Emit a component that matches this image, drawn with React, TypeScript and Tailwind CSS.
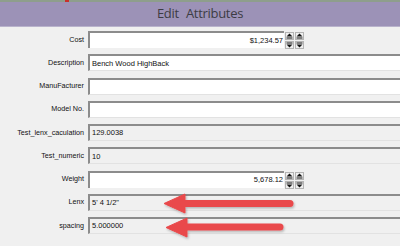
import React from "react";

type Field = {
  label: string;
  value?: string;
  kind: "text" | "readonly" | "spin";
};

const fields: Field[] = [
  { label: "Cost", value: "$1,234.57", kind: "spin" },
  { label: "Description", value: "Bench Wood HighBack", kind: "text" },
  { label: "ManuFacturer", kind: "text" },
  { label: "Model No.", kind: "text" },
  { label: "Test_lenx_caculation", value: "129.0038", kind: "readonly" },
  { label: "Test_numeric", value: "10", kind: "readonly" },
  { label: "Weight", value: "5,678.12", kind: "spin" },
  { label: "Lenx", value: "5' 4 1/2\"", kind: "readonly" },
  { label: "spacing", value: "5.000000", kind: "readonly" },
];

function SpinButton({ up }: { up: boolean }) {
  return (
    <div className="flex h-[8px] w-[9px] items-center justify-center border border-[#b4b4b4] bg-[#eeeeee]">
      <svg width="7" height="6" viewBox="0 0 7 6">
        {up ? (
          <>
            <path d="M3.5 0.5 L6.5 3.5 L0.5 3.5 Z" fill="#111" />
            <rect x="0.5" y="4.5" width="6" height="1" fill="#111" />
          </>
        ) : (
          <>
            <rect x="0.5" y="0.5" width="6" height="1" fill="#111" />
            <path d="M0.5 2.5 L6.5 2.5 L3.5 5.5 Z" fill="#111" />
          </>
        )}
      </svg>
    </div>
  );
}

function SpinColumn() {
  return (
    <div className="flex flex-col gap-[1px] pt-[1px]">
      <SpinButton up />
      <SpinButton up={false} />
    </div>
  );
}

function FieldBox({ field }: { field: Field }) {
  if (field.kind === "spin") {
    return (
      <div className="flex h-[18px] items-start">
        <div className="flex h-[17px] w-[196px] items-center justify-end border-t-2 border-l-2 border-t-[#8c8c8c] border-l-[#8c8c8c] bg-white pr-[1px] text-[7.5px] text-[#111]">
          {field.value}
        </div>
        <div className="ml-[1px] flex gap-[1px]">
          <SpinColumn />
          <SpinColumn />
        </div>
      </div>
    );
  }
  const bg = field.kind === "text" ? "bg-white" : "bg-[#f0f0f0]";
  return (
    <div
      className={`flex h-[17px] w-[330px] items-center border-t-2 border-l-2 border-b border-t-[#8c8c8c] border-l-[#8c8c8c] border-b-[#e2e2e2] pl-[2px] text-[7.5px] text-[#111] ${bg}`}
    >
      {field.value}
    </div>
  );
}

export default function App() {
  return (
    <div
      className="relative h-[246px] w-[400px] overflow-hidden bg-[#f0f0f0]"
      style={{ fontFamily: '"Liberation Sans", Arial, sans-serif' }}
    >
      <div className="relative h-[2px] bg-[#8e9e8c]">
        <div className="absolute left-[65px] top-0 h-[2px] w-[4px] bg-[#c8302c]" />
      </div>
      <div className="flex h-[25px] items-center justify-center bg-[#9c92b7] border-b border-[#b9b3cc]">
        <span
          className="text-[13px] tracking-[-0.3px] text-[#3c3c44] [word-spacing:4px]"
          style={{ fontFamily: '"Open Sans", sans-serif' }}
        >
          Edit Attributes
        </span>
      </div>

      <div className="mt-[4px] flex flex-col gap-[5.25px]">
        {fields.map((f) => (
          <div key={f.label} className="grid h-[18px] grid-cols-[88px_1fr] items-start">
            <div className="flex h-[18px] items-center justify-end pr-[4px] text-[7.2px] text-[#111]">
              {f.label}
            </div>
            <FieldBox field={f} />
          </div>
        ))}
      </div>

      <svg
        className="pointer-events-none absolute left-0 top-0"
        width="400"
        height="246"
        viewBox="0 0 400 246"
      >
        <defs>
          <filter id="sh" x="-10%" y="-30%" width="120%" height="160%">
            <feDropShadow dx="1" dy="1.5" stdDeviation="1" floodColor="#000" floodOpacity="0.25" />
          </filter>
        </defs>
        <g fill="#e9494b" stroke="#e9494b" filter="url(#sh)">
          <path d="M164 203.5 L185 194 L185 213 Z" strokeWidth="1" strokeLinejoin="round" />
          <line x1="184" y1="203.5" x2="290" y2="203.5" strokeWidth="7" strokeLinecap="round" />
          <path d="M166 227.5 L187 218 L187 237 Z" strokeWidth="1" strokeLinejoin="round" />
          <line x1="186" y1="227" x2="280" y2="227" strokeWidth="7" strokeLinecap="round" />
        </g>
      </svg>
    </div>
  );
}
